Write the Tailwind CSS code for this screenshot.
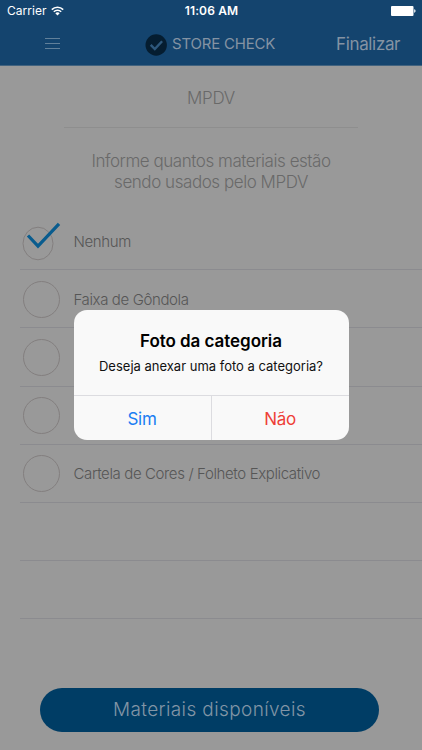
<!DOCTYPE html>
<html lang="pt-BR">
<head>
    <meta charset="UTF-8">
    <meta name="viewport" content="width=device-width, initial-scale=1.0">
    <title>Store Check - MPDV</title>
    <script src="https://cdn.jsdelivr.net/npm/@tailwindcss/browser@4"></script>
</head>
<body class="relative w-[422px] h-[750px] overflow-hidden bg-[#999999] font-['Inter',sans-serif] flex flex-col whitespace-nowrap">
    <!-- Header -->
    <header class="h-[66px] shrink-0 bg-[#14446e] border-b border-[#42637f]">
        <!-- Status bar -->
        <div class="h-[22px] grid grid-cols-3 items-center pl-[7px] pr-1.5 text-white text-xs">
            <div class="flex items-center gap-[5px]">
                <span class="tracking-[0.02px]">Carrier</span>
                <svg class="w-[13px] h-[10px]" viewBox="0 0 13 10" fill="none" stroke="white" stroke-width="1.6">
                    <path d="M0.8 3.6a8.2 8.2 0 0 1 11.4 0M2.8 5.8a5.3 5.3 0 0 1 7.4 0"/>
                    <path d="M6.5 9.6 4.3 7.3a3.1 3.1 0 0 1 4.4 0z" fill="white" stroke="none"/>
                </svg>
            </div>
            <div class="text-center font-semibold tracking-[0.15px]">11:06 AM</div>
            <div class="flex justify-end items-center">
                <svg class="w-[25px] h-[10px]" viewBox="0 0 25 10" fill="white">
                    <rect width="22.5" height="10" rx="1"/>
                    <path d="M23.2 3.3c1.8.3 1.8 3.1 0 3.4z"/>
                </svg>
            </div>
        </div>

        <!-- Nav bar -->
        <div class="h-[43px] flex items-center text-[#8493a3]">
            <button class="ml-[45px] w-[15px]">
                <svg class="w-[15px] h-[11px] mb-px" viewBox="0 0 15 11" stroke="#61809a" stroke-width="1">
                    <path d="M0 .5h15M0 5.5h15M0 10.5h15"/>
                </svg>
            </button>
            <div class="ml-[85px] flex items-center gap-[5px]">
                <svg class="w-[22px] h-[22px] mt-[3px]" viewBox="0 0 22 22" fill="none">
                    <circle cx="11.2" cy="11" r="10.7" fill="#051d30"/>
                    <path d="M5.7 10.8 9.8 15l7.3-7.8" stroke="#2e587c" stroke-width="2.4"/>
                </svg>
                <span class="w-[104px] text-[15px] tracking-[-0.2px] pt-0.5">STORE CHECK</span>
            </div>
            <button class="ml-[60px] pt-[3px] text-[17px] tracking-[-0.35px]">Finalizar</button>
        </div>
    </header>

    <!-- Category -->
    <section class="text-center text-[#696969] font-light text-[17px] leading-[21px]">
        <h1 class="pt-[22px] h-[61px] tracking-[-0.3px]">MPDV</h1>
        <div class="ml-[64px] w-[294px] h-px bg-[#8e8e8e]"></div>
        <p class="mt-[23px] h-[61px] tracking-[-0.45px]">Informe quantos materiais estão<br>sendo usados pelo MPDV</p>
    </section>

    <!-- Materials list -->
    <ul class="pl-5 text-[#565656] font-light text-[15px] tracking-[-0.38px]">
        <li class="h-[58.2px] border-b border-[#8b8b8f] flex items-center">
            <svg class="w-[42px] h-[42px] shrink-0" viewBox="0 0 42 42" fill="none">
                <ellipse cx="18" cy="23.5" rx="15" ry="16.3" stroke="#837f7f"/>
                <path d="m8 15.5 10 10.7L39 3.8" stroke="#095c8e" stroke-width="3.2"/>
            </svg>
            <span class="ml-[11.5px] pt-[3px]">Nenhum</span>
        </li>
        <li class="h-[58.2px] border-b border-[#8b8b8f] flex items-center">
            <span class="ml-[3px] mr-[13.5px] mt-0.5 w-[37px] h-[37px] rounded-full border border-[#837f7f]"></span>
            <span class="pt-[3px]">Faixa de Gôndola</span>
        </li>
        <li class="h-[58.2px] border-b border-[#8b8b8f] flex items-center">
            <span class="ml-[3px] mr-[13.5px] mt-px w-[37px] h-[37px] rounded-full border border-[#837f7f]"></span>
        </li>
        <li class="h-[58.2px] border-b border-[#8b8b8f] flex items-center">
            <span class="ml-[3px] mr-[13.5px] w-[37px] h-[37px] rounded-full border border-[#837f7f]"></span>
        </li>
        <li class="h-[58.2px] border-b border-[#8b8b8f] flex items-center">
            <span class="ml-[3px] mr-[13.5px] w-[37px] h-[37px] rounded-full border border-[#837f7f]"></span>
            <span class="pt-0.5">Cartela de Cores / Folheto Explicativo</span>
        </li>
        <li class="h-[58.2px] border-b border-[#8b8b8f]"></li>
        <li class="h-[58.2px] border-b border-[#8b8b8f]"></li>
    </ul>

    <button class="mt-auto mb-[18px] ml-10 w-[339px] h-[44px] shrink-0 rounded-full bg-[#003d65] text-[#8295a6] font-light text-[19px] tracking-[0.38px]">Materiais disponíveis</button>

    <!-- Alert -->
    <div class="absolute left-[73.5px] top-[310px] w-[275px] h-[130px] rounded-[13px] bg-[#f9f9f9] text-center flex flex-col overflow-hidden">
        <div class="flex-1 pt-5">
            <h2 class="text-[17px] leading-[22px] font-semibold text-black tracking-[-0.05px]">Foto da categoria</h2>
            <p class="mt-[5px] text-[13px] leading-[18px] text-[#111111]">Deseja anexar uma foto a categoria?</p>
        </div>
        <div class="h-[45px] border-t border-[#dcdce0] grid grid-cols-[138px_1fr] text-[17px] tracking-[-0.3px]">
            <button class="pt-[3px] border-r border-[#dcdce0] text-[#1b7df2]">Sim</button>
            <button class="pt-[3px] text-[#ee3f38]">Não</button>
        </div>
    </div>
</body>
</html>
